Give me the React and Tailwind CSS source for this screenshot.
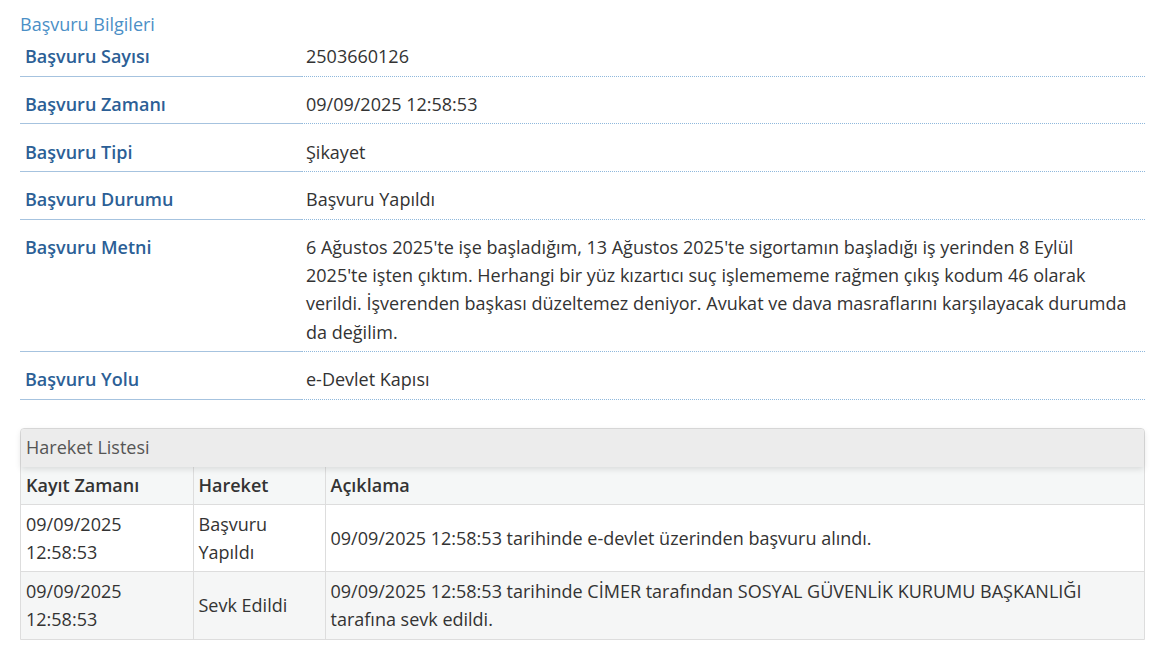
const details = [
  { label: 'Başvuru Sayısı', value: '2503660126' },
  { label: 'Başvuru Zamanı', value: '09/09/2025 12:58:53' },
  { label: 'Başvuru Tipi', value: 'Şikayet' },
  { label: 'Başvuru Durumu', value: 'Başvuru Yapıldı' },
  {
    label: 'Başvuru Metni',
    value:
      "6 Ağustos 2025'te işe başladığım, 13 Ağustos 2025'te sigortamın başladığı iş yerinden 8 Eylül 2025'te işten çıktım. Herhangi bir yüz kızartıcı suç işlemememe rağmen çıkış kodum 46 olarak verildi. İşverenden başkası düzeltemez deniyor. Avukat ve dava masraflarını karşılayacak durumda da değilim.",
  },
  { label: 'Başvuru Yolu', value: 'e-Devlet Kapısı' },
];

const movements = [
  {
    time: ['09/09/2025', '12:58:53'],
    action: ['Başvuru', 'Yapıldı'],
    note: '09/09/2025 12:58:53 tarihinde e-devlet üzerinden başvuru alındı.',
  },
  {
    time: ['09/09/2025', '12:58:53'],
    action: ['Sevk Edildi'],
    note: '09/09/2025 12:58:53 tarihinde CİMER tarafından SOSYAL GÜVENLİK KURUMU BAŞKANLIĞI tarafına sevk edildi.',
  },
];

const App = () => {
  return (
    <div
      className="bg-white min-h-[668px] pl-5 pr-6 pt-[10px] text-[18px] text-[#333]"
      style={{ fontFamily: '"Open Sans", "Noto Sans", sans-serif' }}
    >
      <h3 className="text-[18px] leading-[28px] text-[#4b8fc6] font-normal">Başvuru Bilgileri</h3>

      <div className="-mt-[9px]">
        {details.map((d, i) => (
          <div key={i} className="flex leading-[28.33px]">
            <div className="w-[282px] shrink-0 border-b border-[#a6c3df] pl-[5px] pt-[13.3px] pb-[5px] font-semibold text-[#2c5f96]">
              {d.label}
            </div>
            <div className="flex-1 border-b border-dotted border-[#8fb8dc] pl-1 pr-2 pt-[13.3px] pb-[5px]">
              {d.value}
            </div>
          </div>
        ))}
      </div>

      <div className="mt-[28px] border border-[#dddddd] rounded-t-[4px]">
        <div className="bg-[#ececec] px-[5px] h-[38px] flex items-center text-[#555] rounded-t-[4px] shadow-[0_2px_6px_rgba(0,0,0,0.12)] relative">
          Hareket Listesi
        </div>
        <table className="w-full border-collapse text-left">
          <thead>
            <tr className="bg-[#f5f7f7]">
              <th className="w-[172px] h-[38px] px-[5px] border-r border-b border-[#dddddd] font-semibold">Kayıt Zamanı</th>
              <th className="w-[132px] px-[5px] border-r border-b border-[#dddddd] font-semibold">Hareket</th>
              <th className="px-[5px] border-b border-[#dddddd] font-semibold">Açıklama</th>
            </tr>
          </thead>
          <tbody className="leading-[28px]">
            {movements.map((m, i) => (
              <tr key={i} className={i === 0 ? 'bg-white border-b border-[#dddddd]' : 'bg-[#f5f6f6]'}>
                <td className="h-[67px] px-[5px] border-r border-[#dddddd] align-middle">
                  {m.time[0]}
                  <br />
                  {m.time[1]}
                </td>
                <td className="px-[5px] border-r border-[#dddddd] align-middle">
                  {m.action.map((a, j) => (
                    <div key={j}>{a}</div>
                  ))}
                </td>
                <td className="px-[5px] pr-8 align-middle">{m.note}</td>
              </tr>
            ))}
          </tbody>
        </table>
      </div>
    </div>
  );
};

export default App;
